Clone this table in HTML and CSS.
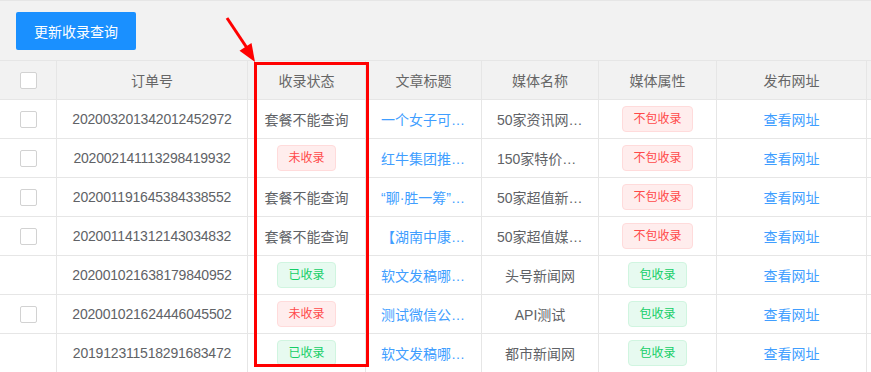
FILE: index.html
```html
<!DOCTYPE html>
<html lang="zh-CN">
<head>
    <meta charset="UTF-8">
    <meta name="viewport" content="width=device-width, initial-scale=1.0">
    <link rel="stylesheet" href="styles.css">
    <title>收录查询</title>
</head>
<body>
    <div class="pagina">
        <div class="barra">
            <button class="btn-actualizar">更新收录查询</button>
        </div>
        <div class="tabla-caja">
            <table class="tabla">
                <thead>
                    <tr>
                        <th class="c-check"><span class="check"></span></th>
                        <th class="c-orden">订单号</th>
                        <th class="c-estado">收录状态</th>
                        <th class="c-titulo">文章标题</th>
                        <th class="c-medio">媒体名称</th>
                        <th class="c-attr">媒体属性</th>
                        <th class="c-url">发布网址</th>
                        <th class="c-op">操作</th>
                    </tr>
                </thead>
                <tbody>
                    <tr>
                        <td><span class="check"></span></td>
                        <td class="num">202003201342012452972</td>
                        <td>套餐不能查询</td>
                        <td class="link">一个女子可以有多美</td>
                        <td>50家资讯网站套餐</td>
                        <td><span class="tag rojo">不包收录</span></td>
                        <td class="link">查看网址</td>
                        <td></td>
                    </tr>
                    <tr>
                        <td><span class="check"></span></td>
                        <td class="num">202002141113298419932</td>
                        <td><span class="tag rojo">未收录</span></td>
                        <td class="link">红牛集团推出新品</td>
                        <td>150家特价媒体</td>
                        <td><span class="tag rojo">不包收录</span></td>
                        <td class="link">查看网址</td>
                        <td></td>
                    </tr>
                    <tr>
                        <td><span class="check"></span></td>
                        <td class="num">202001191645384338552</td>
                        <td>套餐不能查询</td>
                        <td class="link">“聊·胜一筹”活动回顾</td>
                        <td>50家超值新闻源</td>
                        <td><span class="tag rojo">不包收录</span></td>
                        <td class="link">查看网址</td>
                        <td></td>
                    </tr>
                    <tr>
                        <td><span class="check"></span></td>
                        <td class="num">202001141312143034832</td>
                        <td>套餐不能查询</td>
                        <td class="link">【湖南中康】健康讲座</td>
                        <td>50家超值媒体套餐</td>
                        <td><span class="tag rojo">不包收录</span></td>
                        <td class="link">查看网址</td>
                        <td></td>
                    </tr>
                    <tr>
                        <td></td>
                        <td class="num">202001021638179840952</td>
                        <td><span class="tag verde">已收录</span></td>
                        <td class="link">软文发稿哪家好</td>
                        <td>头号新闻网</td>
                        <td><span class="tag verde">包收录</span></td>
                        <td class="link">查看网址</td>
                        <td></td>
                    </tr>
                    <tr>
                        <td><span class="check"></span></td>
                        <td class="num">202001021624446045502</td>
                        <td><span class="tag rojo">未收录</span></td>
                        <td class="link">测试微信公众号</td>
                        <td>API测试</td>
                        <td><span class="tag verde">包收录</span></td>
                        <td class="link">查看网址</td>
                        <td></td>
                    </tr>
                    <tr>
                        <td></td>
                        <td class="num">201912311518291683472</td>
                        <td><span class="tag verde">已收录</span></td>
                        <td class="link">软文发稿哪家强</td>
                        <td>都市新闻网</td>
                        <td><span class="tag verde">包收录</span></td>
                        <td class="link">查看网址</td>
                        <td></td>
                    </tr>
                </tbody>
            </table>
        </div>

        <!-- marca roja sobre la columna de estado -->
        <div class="marco"></div>
        <svg class="flecha" width="50" height="62" viewBox="0 0 50 62">
            <line x1="12" y1="13" x2="34" y2="46" stroke="#ff0000" stroke-width="3"/>
            <polygon points="40,57 36.5,38 24.5,45.8" fill="#ff0000"/>
        </svg>
    </div>
</body>
</html>
```

FILE: styles.css
```css
*{
    padding: 0;
    margin: 0;
    box-sizing: border-box;
}
html,body{
    width: 100%;
    height: 100%;
    overflow: hidden;
    background-color: #fff;
    font-family: "Liberation Sans", "Noto Sans CJK SC", sans-serif;
    font-size: 14px;
    color: #606266;
}
.pagina{
    position: relative;
    width: 100%;
}
.barra{
    background-color: #f2f2f2;
    border-top: 1px solid #e6e6e6;
    padding: 11px 16px 10px;
    height: 60px;
}
.btn-actualizar{
    width: 120px;
    height: 38px;
    background-color: #1a90ff;
    color: #fff;
    border: none;
    border-radius: 2px;
    font-family: inherit;
    font-size: 14px;
}

.tabla-caja{
    width: 100%;
    overflow: hidden;
}
.tabla{
    table-layout: fixed;
    border-collapse: separate;
    border-spacing: 0;
    width: 1017px;
    border-top: 1px solid #e6e6e6;
}
.tabla th,
.tabla td{
    height: 39px;
    padding: 0 15px;
    border-right: 1px solid #e6e6e6;
    border-bottom: 1px solid #e6e6e6;
    text-align: center;
    white-space: nowrap;
    overflow: hidden;
    text-overflow: ellipsis;
    font-weight: normal;
}
.tabla th{
    background-color: #f2f2f2;
    color: #666;
}
.c-check{ width: 57px; }
.c-orden{ width: 191px; }
.c-estado{ width: 118px; }
.c-titulo{ width: 116px; }
.c-medio{ width: 117px; }
.c-attr{ width: 118px; }
.c-url{ width: 150px; }
.c-op{ width: 150px; }

.tabla td.num{
    padding: 0 4px;
    letter-spacing: -0.2px;
}
.tabla td.link{
    color: #409eff;
}
.check{
    display: inline-block;
    width: 17px;
    height: 17px;
    border: 1px solid #d2d2d2;
    border-radius: 2px;
    background-color: #fff;
    vertical-align: middle;
}
.tag{
    display: inline-block;
    height: 26px;
    line-height: 24px;
    padding: 0 10px;
    border: 1px solid;
    border-radius: 4px;
    font-size: 12px;
    vertical-align: middle;
}
.rojo{
    background-color: #ffeded;
    border-color: #ffdbdb;
    color: #ff4949;
}
.verde{
    background-color: #e7faf0;
    border-color: #d0f5e0;
    color: #13ce66;
}

.marco{
    position: absolute;
    left: 254px;
    top: 62px;
    width: 115px;
    height: 305px;
    border: 3px solid #ff0000;
}
.flecha{
    position: absolute;
    left: 215px;
    top: 5px;
}
```
